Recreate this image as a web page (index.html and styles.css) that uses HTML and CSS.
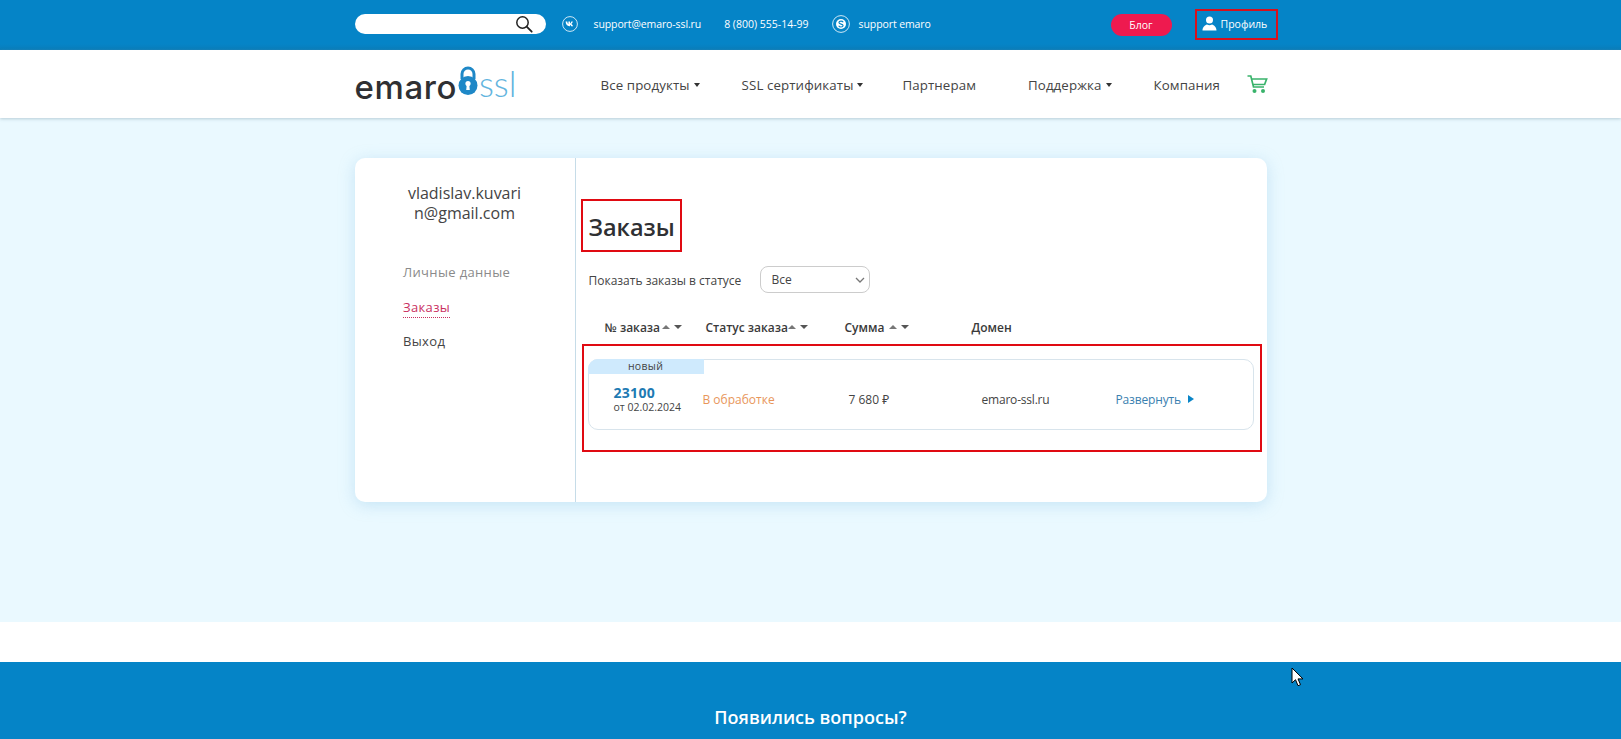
FILE: index.html
```html
<!DOCTYPE html>
<html lang="ru">
<head>
<meta charset="utf-8">
<title>Заказы — emaro-ssl</title>
<link rel="stylesheet" href="styles.css">
</head>
<body>
<header class="topbar">
  <div class="wrap topbar-in">
    <div class="search">
      <svg class="search-ico" width="18" height="18" viewBox="0 0 18 18"><circle cx="7.5" cy="7.5" r="5.7" fill="none" stroke="#222" stroke-width="1.5"/><path d="M11.7 11.7l5 5" stroke="#222" stroke-width="1.8" stroke-linecap="round"/></svg>
    </div>
    <svg class="vk" width="16" height="16" viewBox="0 0 16 16"><circle cx="8" cy="8" r="7.4" fill="none" stroke="#cfe8f6" stroke-width="1"/><path d="M3.6 5.6h1.7c.1 1.3.7 2.3 1.1 2.5V5.6H8v1.9c.5-.1 1-.8 1.3-1.9h1.5c-.2 1.1-.9 2-1.5 2.4.6.3 1.4 1 1.8 2.2H9.2C8.9 9.4 8.500 8.800 8 8.700v1.500H7.500C5.200 10.200 3.800 8.600 3.600 5.600z" fill="#fff"/></svg>
    <a class="top-link email">support@emaro-ssl.ru</a>
    <a class="top-link phone">8 (800) 555-14-99</a>
    <svg class="skype" width="18" height="18" viewBox="0 0 18 18"><circle cx="9" cy="9" r="8.400" fill="none" stroke="#cfe8f6" stroke-width="1"/><circle cx="9" cy="9" r="5" fill="#fff"/><path d="M11.200 7.200C10.800 6.400 10 6.100 9 6.100c-1.200 0-2.100.6-2.100 1.500 0 2 4.200 1 4.200 2.900 0 .9-.9 1.500-2.100 1.500-1.100 0-1.900-.4-2.300-1.200" fill="none" stroke="#0584c7" stroke-width="1.100"/></svg>
    <a class="top-link skype-name">support emaro</a>
    <a class="blog">Блог</a>
    <a class="profile">
      <svg width="15" height="15" viewBox="0 0 15 15"><circle cx="7.500" cy="4" r="3.500" fill="#fff"/><path d="M0.500 14.500c0-3.500 2.500-5.500 4.500-6 1.500 1 3.500 1 5 0 2 .5 4.500 2.500 4.500 6z" fill="#fff"/></svg>
      <span>Профиль</span>
    </a>
  </div>
</header>

<nav class="mainnav">
  <div class="wrap nav-in">
    <a class="logo">
      <span class="logo-word">emaro</span>
      <svg class="logo-lock" width="20" height="30" viewBox="0 0 20 30"><path d="M4 13V8a6 6 0 0 1 12 0v5" fill="none" stroke="#1e88c7" stroke-width="3"/><circle cx="10" cy="19.500" r="9.500" fill="#1e88c7"/><circle cx="10" cy="17.500" r="2.600" fill="#fff"/><path d="M8.800 18.500h2.400l.6 5.500H8.200z" fill="#fff"/></svg>
      <span class="logo-ssl">ssl</span>
    </a>
    <ul class="menu">
      <li class="m1"><a>Все продукты</a><i class="caret"></i></li>
      <li class="m2"><a>SSL сертификаты</a><i class="caret"></i></li>
      <li class="m3"><a>Партнерам</a></li>
      <li class="m4"><a>Поддержка</a><i class="caret"></i></li>
      <li class="m5"><a>Компания</a></li>
    </ul>
    <svg class="cart" width="21" height="19" viewBox="0 0 21 19"><path d="M0.500 1h3.300l2.700 11h10.500M4.600 4h15l-2 5.500H6" fill="none" stroke="#39b36b" stroke-width="1.700"/><circle cx="7.500" cy="16" r="2" fill="#39b36b"/><circle cx="16" cy="16" r="2" fill="#39b36b"/></svg>
  </div>
</nav>

<main class="page">
  <div class="wrap card">
    <aside class="side">
      <div class="side-email">vladislav.kuvarin@gmail.com</div>
      <ul class="side-menu">
        <li><a class="muted">Личные данные</a></li>
        <li><a class="active">Заказы</a></li>
        <li><a>Выход</a></li>
      </ul>
    </aside>
    <section class="content">
      <h1 class="title">Заказы</h1>
      <div class="filter">
        <label class="filter-label" for="st">Показать заказы в статусе</label>
        <select id="st" class="filter-select"><option>Все</option></select>
      </div>
      <div class="thead">
        <div class="th"><span>№ заказа</span><i class="up first"></i><i class="down"></i></div>
        <div class="th"><span>Статус заказа</span><i class="up"></i><i class="down"></i></div>
        <div class="th"><span>Сумма</span><i class="up wide"></i><i class="down"></i></div>
        <div class="th"><span>Домен</span></div>
      </div>
      <div class="orders">
        <article class="order">
          <div class="badge">новый</div>
          <div class="order-row">
            <div class="num"><b>23100</b><small>от 02.02.2024</small></div>
            <div class="status">В обработке</div>
            <div>7 680 ₽</div>
            <div class="domain">emaro-ssl.ru</div>
            <a class="expand">Развернуть<i class="tri"></i></a>
          </div>
        </article>
      </div>
    </section>
  </div>
</main>

<div class="gap"></div>
<footer class="foot">
  <h2 class="foot-title">Появились вопросы?</h2>
</footer>

<svg class="cursor" width="13" height="20" viewBox="0 0 13 20"><path d="M1 1v15l3.500-3.300 2.500 6 2.500-1-2.500-5.800H12z" fill="#fff" stroke="#000" stroke-width="1"/></svg>
</body>
</html>
```
FILE: styles.css
```css
* { box-sizing: border-box; }
html, body { margin: 0; padding: 0; height: 739px; overflow: hidden; }
body { font-family: "Open Sans", "Noto Sans", sans-serif; color: #333; background: #fff; position: relative; }
a { text-decoration: none; color: inherit; }
ul { list-style: none; margin: 0; padding: 0; }
.wrap { width: 912px; margin: 0 auto; }

/* top bar */
.topbar { height: 50px; background: linear-gradient(to bottom, #0584c7 0, #0584c7 88%, #0a7db9 100%); color: #fff; }
.topbar-in { height: 100%; display: flex; align-items: center; font-size: 10.500px; padding-bottom: 2px; }
.search { width: 191px; height: 20px; background: #fff; border-radius: 10px; display: flex; justify-content: flex-end; align-items: center; padding-right: 13px; }
.vk { margin-left: 16px; flex: none; }
.top-link { white-space: nowrap; }
.email { margin-left: 16px; letter-spacing: -.1px; }
.phone { margin-left: 23px; }
.skype { margin-left: 23px; flex: none; }
.skype-name { margin-left: 9px; letter-spacing: -.1px; }
.blog { margin-left: auto; margin-top: 2px; width: 61px; height: 22px; background: #ee1a4f; border-radius: 11px; display: flex; align-items: center; justify-content: center; font-size: 10.500px; }
.profile { margin-left: 23px; margin-right: -11px; width: 83px; height: 31px; border: 2px solid #d8101c; display: flex; align-items: center; padding-left: 5px; gap: 4px; }
.profile svg { margin-top: -2px; }

/* main nav */
.mainnav { height: 68px; background: #fff; box-shadow: 0 1px 3px rgba(120, 150, 165, .45); position: relative; }
.nav-in { height: 100%; display: flex; align-items: center; }
.logo { display: flex; align-items: center; width: 246px; height: 100%; flex: none; }
.logo-word { font-family: "Inter", sans-serif; font-weight: 500; font-size: 33px; color: #2f3033; line-height: 1; margin-top: 6px; letter-spacing: .6px; }
.logo-lock { margin-left: 1px; margin-top: -6px; flex: none; }
.logo-ssl { font-family: "Lato", sans-serif; font-weight: 300; font-size: 35px; color: #62b4de; line-height: 1; margin-left: 1px; margin-top: -2px; }
.menu { display: flex; align-items: center; font-size: 13.300px; letter-spacing: .1px; color: #444; margin-top: 2px; }
.menu li { display: flex; align-items: center; white-space: nowrap; }
.caret { width: 0; height: 0; border: 3px solid transparent; border-top: 4px solid #333; border-bottom: 0; margin-left: 4px; }
.m2 { margin-left: 42px; }
.m3 { margin-left: 39px; }
.m4 { margin-left: 52px; }
.m5 { margin-left: 42px; }
.cart { margin-left: 27px; flex: none; }

/* page */
.page { height: 504px; background: #eaf9ff; padding-top: 40px; }
.card { height: 344px; background: #fff; border-radius: 10px; box-shadow: 0 3px 16px rgba(130, 190, 225, .35); display: flex; }
.side { width: 220px; flex: none; padding: 25px 48px 0; }
.side-email { font-size: 16px; line-height: 20px; text-align: center; word-break: break-all; color: #444; margin: 0 2px; }
.side-menu { margin-top: 37px; font-size: 13px; letter-spacing: .35px; color: #444; margin-right: -30px; padding-left: .5px; }
.side-menu li { height: 34.500px; line-height: 24px; }
.muted { color: #8a8a8a; }
.active { color: #c9305f; border-bottom: 1px dotted #c9305f; padding-bottom: 1px; }
.content { flex: 1; border-left: 1px solid #c6dce8; padding: 41px 0 0 5px; }
.title { display: inline-block; margin: 0; height: 53px; width: 101px; border: 2px solid #e00a12; padding-left: 6px; font-size: 23.500px; font-weight: 600; line-height: 52px; color: #2f3033; vertical-align: top; }
.filter { display: flex; align-items: center; margin: 14px 0 0 8px; font-size: 12px; color: #444; }
.filter-label { width: 171px; padding-top: 1px; }
.filter-select { appearance: none; width: 110px; height: 27px; border: 1px solid #ccc; border-radius: 8px; background: #fff url("data:image/svg+xml,%3Csvg xmlns='http://www.w3.org/2000/svg' width='10' height='6'%3E%3Cpath d='M1 1l4 4 4-4' fill='none' stroke='%23777' stroke-width='1.300'/%3E%3C/svg%3E") no-repeat right 4px center; font: 12px "Open Sans", sans-serif; color: #444; padding-left: 11px; }
.thead { display: grid; grid-template-columns: 102px 139px 127px 1fr; margin: 24px 0 0; padding-left: 24px; height: 20px; align-items: center; font-size: 12px; font-weight: 600; color: #3a3a3a; }
.th { display: flex; align-items: center; white-space: nowrap; }
.th:nth-child(n+2) { margin-left: -1px; }
.up, .down { width: 0; height: 0; border: 4px solid transparent; display: block; }
.up { border-top: 0; border-bottom: 4px solid #777; }
.down { border-bottom: 0; border-top: 4px solid #555; margin-left: 4px; }
.up.first { margin-left: 2px; }
.up.wide { margin-left: 5px; }
.orders { margin: 7px 0 0 1px; width: 680px; height: 108px; border: 2px solid #e00a12; padding: 13px 6px 0 4px; }
.order { height: 71px; width: 666px; border: 1px solid #d8e4ec; border-radius: 10px; font-size: 12px; color: #444; }
.badge { width: 116px; height: 15px; margin: -1px 0 0 -1px; background: #cfeafd; border-radius: 10px 0 0 0; text-align: center; font-size: 10.500px; line-height: 15px; letter-spacing: .3px; color: #444; }
.order-row { display: grid; grid-template-columns: 89px 146px 133px 134px 1fr; align-items: center; height: 54px; padding-left: 25px; padding-bottom: 4px; }
.num b { display: block; font-size: 14px; font-weight: 700; line-height: 16px; color: #1d7ab3; letter-spacing: .3px; }
.num small { display: block; font-size: 10.500px; line-height: 13px; }
.status { color: #e8965a; }
.domain { letter-spacing: -.2px; }
.expand { color: #3a80b0; display: flex; align-items: center; letter-spacing: -.15px; }
.tri { width: 0; height: 0; border: 4px solid transparent; border-right: 0; border-left: 6px solid #0a85c7; margin-left: 7px; }

/* footer */
.gap { height: 40px; background: #fff; }
.foot { height: 77px; background: #0584c7; padding-top: 43px; overflow: hidden; }
.foot-title { margin: 0; text-align: center; color: #fff; font-size: 18px; font-weight: 600; line-height: 24px; }
.cursor { position: absolute; left: 1291px; top: 667px; }
```
